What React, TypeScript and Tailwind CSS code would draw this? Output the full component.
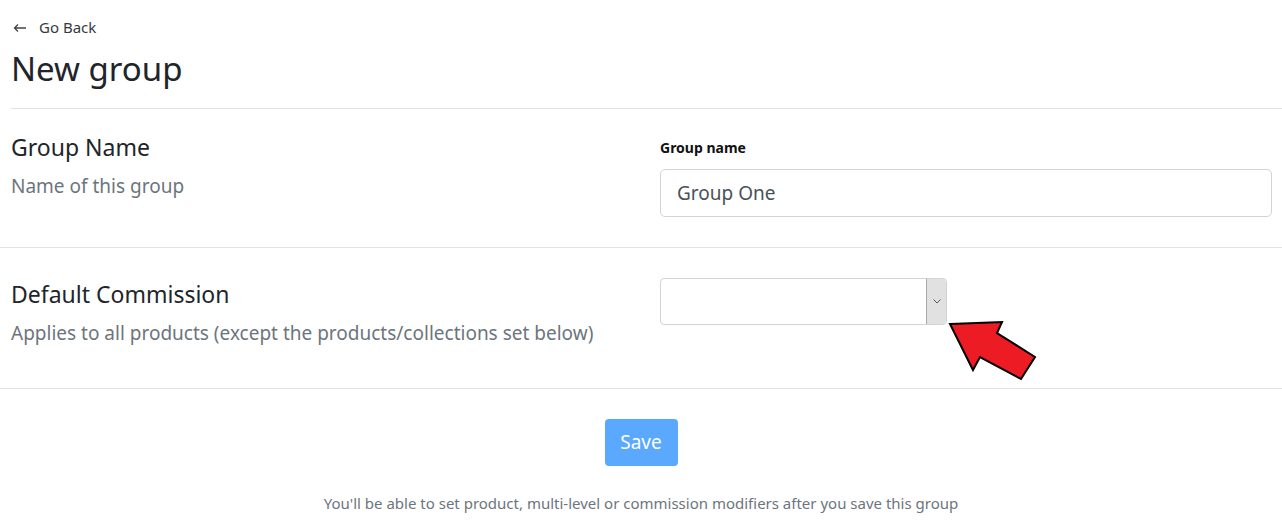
const FONT = { fontFamily: '"Segoe UI", "Noto Sans", "Open Sans", sans-serif' };

function Section({ title, subtitle, children }: { title: string; subtitle: string; children: React.ReactNode }) {
    return (
        <div className="grid grid-cols-[649px_1fr] pl-[11px] pr-[10px]">
            <div>
                <h2 className="text-[23px] leading-[30px] text-[#212529]">{title}</h2>
                <p className="mt-[12px] text-[19px] leading-[24px] text-[#6c757d]">{subtitle}</p>
            </div>
            <div>{children}</div>
        </div>
    );
}

export default function App() {
    return (
        <div className="min-h-screen bg-white text-[#212529]" style={FONT}>
            {/* Header */}
            <div className="pl-[11px] pt-[16px]">
                <a href="#" className="flex items-center gap-[12px] text-[15px] leading-[22px] text-[#343a40]">
                    <svg width="14" height="10" viewBox="0 0 14 10" className="ml-[2px] mt-[2px]">
                        <path d="M13 5H1.5M5 1.5L1.5 5L5 8.5" fill="none" stroke="#444" strokeWidth="1.3" />
                    </svg>
                    Go Back
                </a>
                <h1 className="mt-[7px] text-[33px] leading-[48px] text-[#212529]">New group</h1>
                <div className="mt-[15px] border-t border-[#e3e3e3]" />
            </div>

            {/* Group name */}
            <div className="pt-[23px] pb-[30px] border-b border-[#e3e3e3]">
                <Section title="Group Name" subtitle="Name of this group">
                    <label className="block pt-[6px] text-[14px] font-bold leading-[20px] text-[#111]">Group name</label>
                    <input
                        readOnly
                        value="Group One"
                        className="mt-[11px] w-full h-[48px] rounded-[5px] border border-[#ced4da] px-[16px] text-[19px] text-[#495057] outline-none"
                        style={FONT}
                    />
                </Section>
            </div>

            {/* Default commission */}
            <div className="pt-[31px] pb-[43px] border-b border-[#e3e3e3] relative">
                <Section title="Default Commission" subtitle="Applies to all products (except the products/collections set below)">
                    <div className="-mt-[1px] flex h-[47px] w-[287px] rounded-[4px] border border-[#ced4da] overflow-hidden">
                        <div className="flex-1" />
                        <div className="flex w-[20px] items-center justify-center border-l border-[#a9a9a9] bg-[#e1e1e1]">
                            <svg width="8" height="5" viewBox="0 0 8 5">
                                <path d="M0.5 0.5L4 4L7.5 0.5" fill="none" stroke="#555" strokeWidth="1" />
                            </svg>
                        </div>
                    </div>
                </Section>
                <svg className="absolute left-[940px] top-[64px]" width="110" height="70" viewBox="940 312 110 70">
                    <polygon
                        points="950,324 1002,322 997,333 1035,357 1021,379 980,357 973,370"
                        fill="#ed1c24"
                        stroke="#000"
                        strokeWidth="2"
                        strokeLinejoin="miter"
                    />
                </svg>
            </div>

            {/* Save */}
            <div className="flex flex-col items-center pt-[30px]">
                <button className="h-[47px] w-[73px] rounded-[4px] bg-[#5aa9fe] text-[19px] text-white" style={FONT}>
                    Save
                </button>
                <p className="mt-[26px] text-[15px] leading-[22px] text-[#6c757d]">
                    You'll be able to set product, multi-level or commission modifiers after you save this group
                </p>
            </div>
        </div>
    );
}
